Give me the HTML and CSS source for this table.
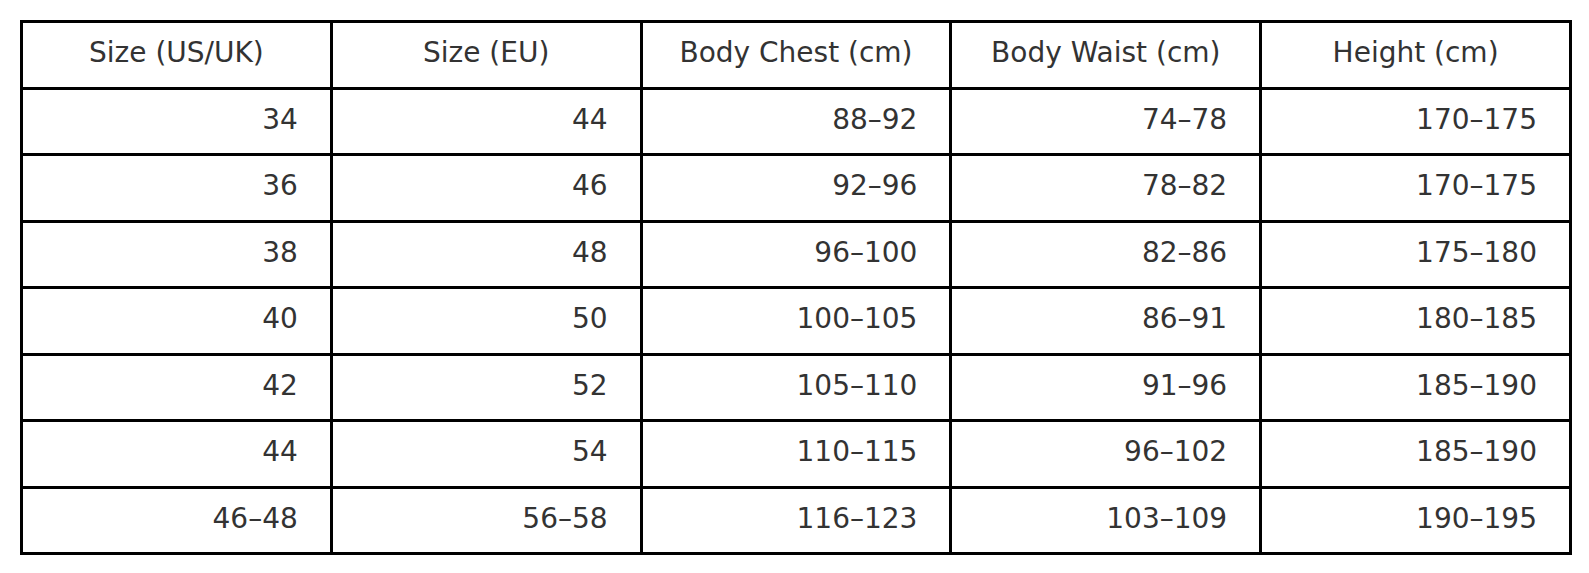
FILE: index.html
```html
<!DOCTYPE html>
<html lang="en">
<head>
<meta charset="utf-8">
<title>Size chart</title>
<link rel="stylesheet" href="styles.css">
</head>
<body>
<table class="size-table">
  <thead>
    <tr>
      <th>Size (US/UK)</th>
      <th>Size (EU)</th>
      <th>Body Chest (cm)</th>
      <th>Body Waist (cm)</th>
      <th>Height (cm)</th>
    </tr>
  </thead>
  <tbody>
    <tr><td>34</td><td>44</td><td>88–92</td><td>74–78</td><td>170–175</td></tr>
    <tr><td>36</td><td>46</td><td>92–96</td><td>78–82</td><td>170–175</td></tr>
    <tr><td>38</td><td>48</td><td>96–100</td><td>82–86</td><td>175–180</td></tr>
    <tr><td>40</td><td>50</td><td>100–105</td><td>86–91</td><td>180–185</td></tr>
    <tr><td>42</td><td>52</td><td>105–110</td><td>91–96</td><td>185–190</td></tr>
    <tr><td>44</td><td>54</td><td>110–115</td><td>96–102</td><td>185–190</td></tr>
    <tr><td>46–48</td><td>56–58</td><td>116–123</td><td>103–109</td><td>190–195</td></tr>
  </tbody>
</table>
</body>
</html>
```
FILE: styles.css
```css
html, body {
  margin: 0;
  padding: 0;
  background: #ffffff;
}

body {
  padding: 20px;
  font-family: "DejaVu Sans", "Liberation Sans", sans-serif;
  color: #333333;
}

.size-table {
  width: 1552px;
  border-collapse: collapse;
  table-layout: fixed;
  font-size: 28px;
}

.size-table th,
.size-table td {
  border: 3px solid #000000;
  height: 66.5px;
  padding: 0 32px 3px 32px;
  box-sizing: border-box;
  vertical-align: middle;
  line-height: 1.15;
}

.size-table th {
  font-weight: normal;
  text-align: center;
}

.size-table td {
  text-align: right;
}
```
